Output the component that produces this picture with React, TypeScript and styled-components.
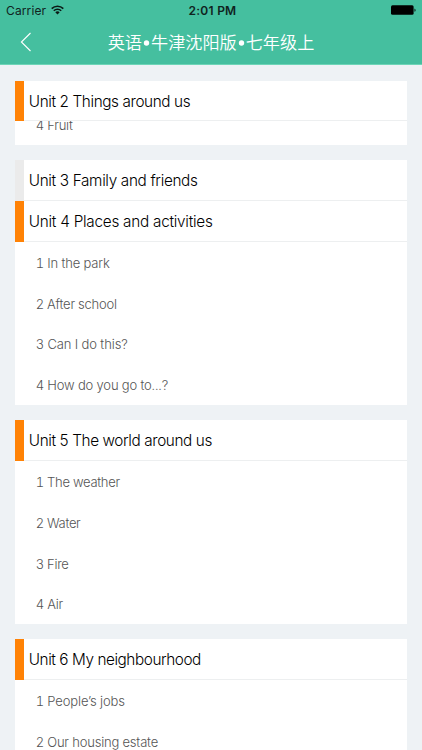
import React from 'react';
import styled, { createGlobalStyle } from 'styled-components';

const GlobalStyle = createGlobalStyle`
  * { box-sizing: border-box; }
  html, body { margin: 0; height: 100%; overflow: hidden; }
  body { background: #eef2f5; font-family: Inter, "Noto Sans CJK SC", sans-serif; }
`;

const Screen = styled.main`
  height: 750px;
  overflow: hidden;
  display: flex;
  flex-direction: column;
  background: #eef2f5;
`;

const Header = styled.header`
  flex: none;
  height: 65.24px;
  background: #45bf9f;
  border-bottom: 0.8px solid #6dd5b7;
`;

const StatusBar = styled.div`
  height: 20.4px;
  padding: 0 6px 0 6px;
  display: grid;
  grid-template-columns: 1fr auto 1fr;
  align-items: center;
  font-family: Inter, sans-serif;
  font-size: 12px;
  color: #10231e;
`;

const Carrier = styled.div`
  display: flex;
  align-items: center;
  gap: 4.5px;
  letter-spacing: 0.12px;
  svg { display: block; margin-top: -1px; }
`;

const Clock = styled.time`
  font-weight: 600;
  letter-spacing: 0.25px;
  padding: 1px 0 0 3px;
`;

const Battery = styled.svg`
  justify-self: end;
  display: block;
`;

const NavBar = styled.nav`
  height: 44px;
  display: grid;
  grid-template-columns: 60px 1fr 60px;
  align-items: center;
`;

const BackButton = styled.button`
  border: 0;
  padding: 0 0 0 20px;
  background: none;
  display: flex;
  svg { display: block; }
`;

const PageTitle = styled.h1`
  margin: 0;
  text-align: center;
  white-space: nowrap;
  font: 350 17.15px/44px "Noto Sans CJK SC", sans-serif;
  color: #fff;
`;

const TitleDot = styled.svg`
  width: 9px;
  height: 6px;
  vertical-align: 3px;
`;

const UnitList = styled.div`
  flex: 1;
  min-height: 0;
  overflow: hidden;
  padding: 15.29px 15.29px 0;
  display: flex;
  flex-direction: column;
  gap: 15.29px;
`;

const Card = styled.section`
  flex: none;
  background: #fff;
`;

const UnitRow = styled.div`
  height: 40.77px;
  display: flex;
`;

const Accent = styled.span<{ $open: boolean }>`
  flex: none;
  width: 8.4px;
  background: ${p => (p.$open ? '#ff8205' : '#ebebeb')};
`;

const UnitTitle = styled.h2<{ $spacing: number }>`
  flex: 1;
  margin: 0;
  padding-left: 5.1px;
  border-bottom: 1px solid #edeff0;
  font-size: 15.3px;
  font-weight: 300;
  line-height: 41.6px;
  letter-spacing: ${p => p.$spacing}px;
  color: #000;
  white-space: nowrap;
`;

const LessonRow = styled.div<{ $spacing: number }>`
  height: 40.77px;
  padding-left: 20.4px;
  font-size: 13px;
  font-weight: 300;
  font-variant-numeric: tabular-nums;
  line-height: 42.3px;
  letter-spacing: ${p => p.$spacing}px;
  color: #555;
  white-space: nowrap;
`;

const ScrolledLessons = styled.div`
  height: 23.8px;
  overflow: hidden;
  display: flex;
  flex-direction: column;
  justify-content: flex-end;
  ${LessonRow} { flex: none; }
`;

type Lesson = { text: string; spacing: number };
type Unit = { title: string; open: boolean; spacing: number; scrolled?: boolean; lessons: Lesson[] };

const groups: Unit[][] = [
  [
    {
      title: 'Unit 2 Things around us',
      open: true,
      spacing: -0.38,
      scrolled: true,
      lessons: [{ text: '4 Fruit', spacing: -0.2 }],
    },
  ],
  [
    { title: 'Unit 3 Family and friends', open: false, spacing: -0.33, lessons: [] },
    {
      title: 'Unit 4 Places and activities',
      open: true,
      spacing: -0.25,
      lessons: [
        { text: '1 In the park', spacing: -0.13 },
        { text: '2 After school', spacing: -0.24 },
        { text: '3 Can I do this?', spacing: -0.08 },
        { text: '4 How do you go to...?', spacing: -0.14 },
      ],
    },
  ],
  [
    {
      title: 'Unit 5 The world around us',
      open: true,
      spacing: -0.38,
      lessons: [
        { text: '1 The weather', spacing: -0.27 },
        { text: '2 Water', spacing: -0.3 },
        { text: '3 Fire', spacing: -0.28 },
        { text: '4 Air', spacing: -0.2 },
      ],
    },
  ],
  [
    {
      title: 'Unit 6 My neighbourhood',
      open: true,
      spacing: -0.42,
      lessons: [
        { text: '1 People’s jobs', spacing: -0.12 },
        { text: '2 Our housing estate', spacing: -0.18 },
      ],
    },
  ],
];

function Dot() {
  return (
    <TitleDot viewBox="0 0 9 6" aria-hidden="true">
      <circle cx="4.5" cy="3" r="2.7" fill="#fff" />
    </TitleDot>
  );
}

function UnitBlock({ unit }: { unit: Unit }) {
  const rows = unit.lessons.map(l => (
    <LessonRow key={l.text} $spacing={l.spacing}>{l.text}</LessonRow>
  ));
  return (
    <>
      <UnitRow>
        <Accent $open={unit.open} />
        <UnitTitle $spacing={unit.spacing}>{unit.title}</UnitTitle>
      </UnitRow>
      {unit.scrolled ? <ScrolledLessons>{rows}</ScrolledLessons> : rows}
    </>
  );
}

export default function App() {
  return (
    <Screen>
      <GlobalStyle />
      <Header>
        <StatusBar>
          <Carrier>
            Carrier
            <svg width="13" height="10" viewBox="0 0 13 10" fill="none" stroke="#0b1915" strokeWidth="1.6">
              <path d="M.7 3.6a8.2 8.2 0 0 1 11.6 0M2.8 5.8a5.2 5.2 0 0 1 7.4 0" />
              <path d="M6.5 9.5 4.3 7.3a3.1 3.1 0 0 1 4.4 0z" fill="#0b1915" stroke="none" />
            </svg>
          </Carrier>
          <Clock>2:01 PM</Clock>
          <Battery width="25" height="10" viewBox="0 0 25 10">
            <rect x="0" y="0.3" width="22.6" height="9.5" rx="1.5" fill="#000" />
            <path d="M23.5 3.4c1.4.5 1.4 2.9 0 3.4z" fill="#000" />
          </Battery>
        </StatusBar>
        <NavBar>
          <BackButton aria-label="Back">
            <svg width="12" height="20" viewBox="0 0 12 20" fill="none" stroke="#fff" strokeWidth="1.1">
              <path d="M10.5 1 1.4 10l9.1 9" />
            </svg>
          </BackButton>
          <PageTitle>英语<Dot />牛津沈阳版<Dot />七年级上</PageTitle>
        </NavBar>
      </Header>
      <UnitList>
        {groups.map(group => (
          <Card key={group[0].title}>
            {group.map(unit => <UnitBlock key={unit.title} unit={unit} />)}
          </Card>
        ))}
      </UnitList>
    </Screen>
  );
}
